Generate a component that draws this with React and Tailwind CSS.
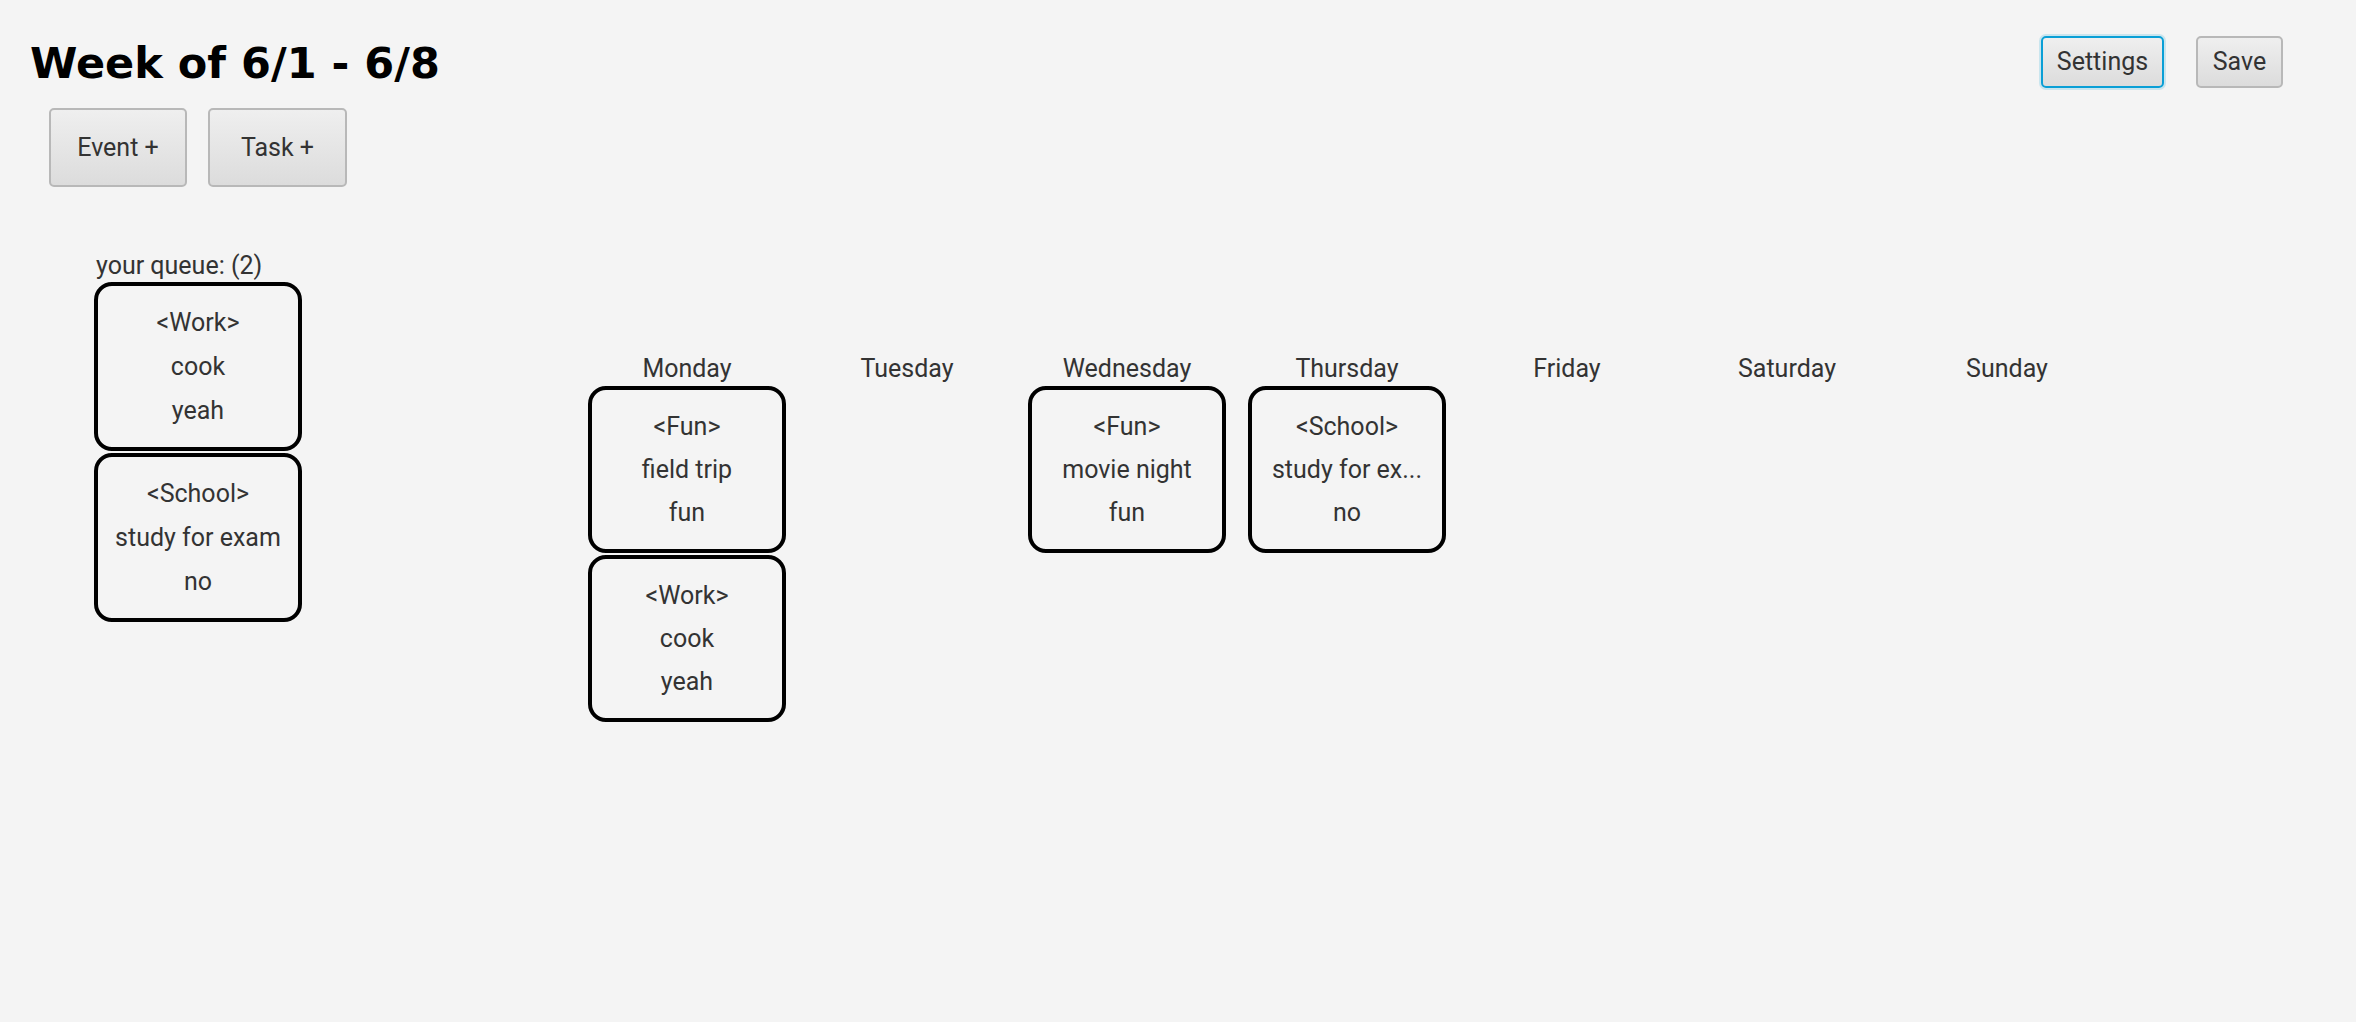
import React from "react";

const queue = [
  { cat: "Work", name: "cook", desc: "yeah" },
  { cat: "School", name: "study for exam", desc: "no" },
];

const week = [
  { day: "Monday", items: [
    { cat: "Fun", name: "field trip", desc: "fun" },
    { cat: "Work", name: "cook", desc: "yeah" },
  ] },
  { day: "Tuesday", items: [] },
  { day: "Wednesday", items: [{ cat: "Fun", name: "movie night", desc: "fun" }] },
  { day: "Thursday", items: [{ cat: "School", name: "study for ex...", desc: "no" }] },
  { day: "Friday", items: [] },
  { day: "Saturday", items: [] },
  { day: "Sunday", items: [] },
];

function FxButton({ children, focused, className }) {
  return (
    <button
      className={
        "flex items-center justify-center rounded-[5px] bg-gradient-to-b from-[#efefef] to-[#dcdcdc] text-[25px] text-[#333333] " +
        (focused
          ? "border-2 border-[#0a9fd6] shadow-[0_0_0_2px_rgba(3,158,211,0.18)] "
          : "border-2 border-[#b8b8b8] ") +
        className
      }
    >
      {children}
    </button>
  );
}

function ItemCard({ item, wide }) {
  return (
    <div
      className={
        "flex flex-col items-center justify-center rounded-[18px] border-4 border-black text-[25px] text-[#333333] " +
        (wide ? "w-[208px] h-[169px] leading-[44px]" : "w-[198px] h-[167px] leading-[43px]")
      }
    >
      <span>&lt;{item.cat}&gt;</span>
      <span className="whitespace-nowrap">{item.name}</span>
      <span>{item.desc}</span>
    </div>
  );
}

export default function App() {
  return (
    <div className="w-[2356px] h-[1022px] overflow-hidden bg-[#f4f4f4] font-['Roboto',sans-serif]">
      <div className="flex items-start justify-between pl-[30px] pr-[73px] pt-[36px]">
        <h1 className="mt-[6px] font-['DejaVu_Sans',sans-serif] text-[43px] font-bold leading-[42px] text-black">
          Week of 6/1 - 6/8
        </h1>
        <div className="flex gap-[32px]">
          <FxButton focused className="w-[123px] h-[52px]">Settings</FxButton>
          <FxButton className="w-[87px] h-[52px]">Save</FxButton>
        </div>
      </div>

      <div className="mt-[20px] flex gap-[21px] pl-[49px]">
        <FxButton className="w-[138px] h-[79px]">Event +</FxButton>
        <FxButton className="w-[139px] h-[79px]">Task +</FxButton>
      </div>

      <div className="flex items-start">
        <div className="ml-[94px] mt-[64px] flex flex-col">
          <div className="pl-[2px] text-[25px] leading-[29px] text-[#333333]">your queue: (2)</div>
          <div className="mt-[2px] flex flex-col gap-[2px]">
            {queue.map((q, i) => (
              <ItemCard key={i} item={q} wide />
            ))}
          </div>
        </div>

        <div className="ml-[275px] mt-[167px] grid grid-cols-[repeat(7,220px)]">
          {week.map((col) => (
            <div key={col.day} className="flex flex-col items-center">
              <div className="text-[25px] leading-[29px] text-[#333333]">{col.day}</div>
              <div className="mt-[3px] flex flex-col gap-[2px]">
                {col.items.map((it, i) => (
                  <ItemCard key={i} item={it} />
                ))}
              </div>
            </div>
          ))}
        </div>
      </div>
    </div>
  );
}
